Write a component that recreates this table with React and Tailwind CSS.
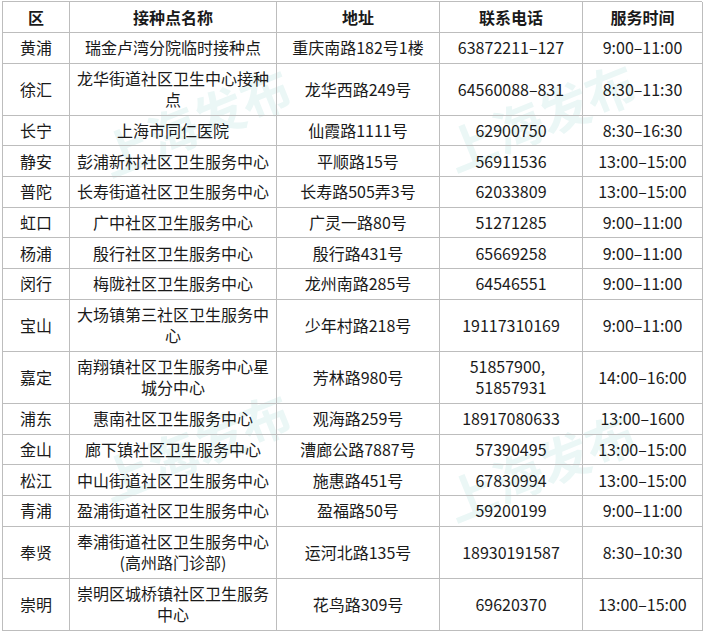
import React from "react";

const rows = [
  { d: "黄浦", n: ["瑞金卢湾分院临时接种点"], a: ["重庆南路182号1楼"], p: ["63872211–127"], t: "9:00–11:00" },
  { d: "徐汇", n: ["龙华街道社区卫生中心接种", "点"], a: ["龙华西路249号"], p: ["64560088–831"], t: "8:30–11:30" },
  { d: "长宁", n: ["上海市同仁医院"], a: ["仙霞路1111号"], p: ["62900750"], t: "8:30–16:30" },
  { d: "静安", n: ["彭浦新村社区卫生服务中心"], a: ["平顺路15号"], p: ["56911536"], t: "13:00–15:00" },
  { d: "普陀", n: ["长寿街道社区卫生服务中心"], a: ["长寿路505弄3号"], p: ["62033809"], t: "13:00–15:00" },
  { d: "虹口", n: ["广中社区卫生服务中心"], a: ["广灵一路80号"], p: ["51271285"], t: "9:00–11:00" },
  { d: "杨浦", n: ["殷行社区卫生服务中心"], a: ["殷行路431号"], p: ["65669258"], t: "9:00–11:00" },
  { d: "闵行", n: ["梅陇社区卫生服务中心"], a: ["龙州南路285号"], p: ["64546551"], t: "9:00–11:00" },
  { d: "宝山", n: ["大场镇第三社区卫生服务中", "心"], a: ["少年村路218号"], p: ["19117310169"], t: "9:00–11:00" },
  { d: "嘉定", n: ["南翔镇社区卫生服务中心星", "城分中心"], a: ["芳林路980号"], p: ["51857900,\u00a0\u00a0", "51857931"], t: "14:00–16:00" },
  { d: "浦东", n: ["惠南社区卫生服务中心"], a: ["观海路259号"], p: ["18917080633"], t: "13:00–1600" },
  { d: "金山", n: ["廊下镇社区卫生服务中心"], a: ["漕廊公路7887号"], p: ["57390495"], t: "13:00–15:00" },
  { d: "松江", n: ["中山街道社区卫生服务中心"], a: ["施惠路451号"], p: ["67830994"], t: "13:00–15:00" },
  { d: "青浦", n: ["盈浦街道社区卫生服务中心"], a: ["盈福路50号"], p: ["59200199"], t: "9:00–11:00" },
  { d: "奉贤", n: ["奉浦街道社区卫生服务中心", "(高州路门诊部)"], a: ["运河北路135号"], p: ["18930191587"], t: "8:30–10:30" },
  { d: "崇明", n: ["崇明区城桥镇社区卫生服务", "中心"], a: ["花鸟路309号"], p: ["69620370"], t: "13:00–15:00" },
];

function Cell({ lines, h, bold }) {
  return (
    <div
      className={
        "relative z-10 flex flex-col items-center justify-center text-center border-r border-b border-[#bdbdbd] px-[4px] " +
        h +
        (bold ? " font-bold" : "")
      }
    >
      {lines.map((l, i) => (
        <div key={i} className="whitespace-nowrap leading-[21px]">
          {l}
        </div>
      ))}
    </div>
  );
}

function Watermark({ className }) {
  return (
    <div
      aria-hidden="true"
      className={
        "pointer-events-none absolute z-0 text-[50px] font-bold leading-none text-[#ebf7f6] -rotate-[22deg] whitespace-nowrap " +
        className
      }
    >
      上海发布
    </div>
  );
}

export default function App() {
  return (
    <div
      className="relative w-[704px] h-[632px] bg-white overflow-hidden text-[16px] text-[#1a1a1a]"
      style={{ fontFamily: '"Noto Sans CJK SC", "Noto Sans", sans-serif' }}
    >
      <Watermark className="left-[95px] top-[95px]" />
      <Watermark className="left-[440px] top-[90px]" />
      <Watermark className="left-[95px] top-[420px]" />
      <Watermark className="left-[440px] top-[440px]" />
      <div className="relative ml-[2px] mt-[1px] w-[700px] grid grid-cols-[67px_207px_163px_143px_120px] border-l border-t border-[#bdbdbd]">
        <Cell lines={["区"]} h="h-[31px]" bold />
        <Cell lines={["接种点名称"]} h="h-[31px]" bold />
        <Cell lines={["地址"]} h="h-[31px]" bold />
        <Cell lines={["联系电话"]} h="h-[31px]" bold />
        <Cell lines={["服务时间"]} h="h-[31px]" bold />
        {rows.map((r, i) => {
          const h = r.n.length > 1 ? "h-[52px]" : "h-[30.7px]";
          return (
            <React.Fragment key={i}>
              <Cell lines={[r.d]} h={h} />
              <Cell lines={r.n} h={h} />
              <Cell lines={r.a} h={h} />
              <Cell lines={r.p} h={h} />
              <Cell lines={[r.t]} h={h} />
            </React.Fragment>
          );
        })}
      </div>
    </div>
  );
}
